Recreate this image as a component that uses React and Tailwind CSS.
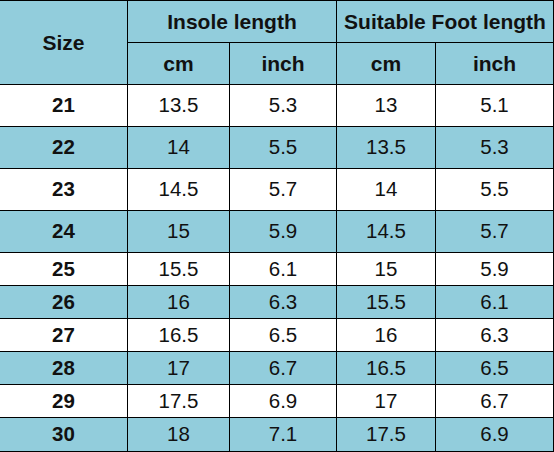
import React from 'react';

// size chart rows: [size, insole cm, insole inch, foot cm, foot inch]
const rows = [
  ['21', '13.5', '5.3', '13', '5.1'],
  ['22', '14', '5.5', '13.5', '5.3'],
  ['23', '14.5', '5.7', '14', '5.5'],
  ['24', '15', '5.9', '14.5', '5.7'],
  ['25', '15.5', '6.1', '15', '5.9'],
  ['26', '16', '6.3', '15.5', '6.1'],
  ['27', '16.5', '6.5', '16', '6.3'],
  ['28', '17', '6.7', '16.5', '6.5'],
  ['29', '17.5', '6.9', '17', '6.7'],
  ['30', '18', '7.1', '17.5', '6.9'],
];

const head = 'bg-[#92cddc] flex items-center justify-center font-bold text-[21px]';

export default function App() {
  return (
    <div className="w-[554px] h-[452px] bg-white font-['Liberation_Sans',Arial,sans-serif] text-[20.5px] text-[#111]">
      <div className="grid grid-cols-[127px_101px_106px_98px_117px] grid-rows-[41px_41px_41px_41px_41px_41px_32px_32px_32px_32px_32px_33px] gap-px bg-black pt-px pr-px pb-px">
        <div className={`${head} row-span-2`}>Size</div>
        <div className={`${head} col-span-2`}>Insole length</div>
        <div className={`${head} col-span-2`}>Suitable Foot length</div>
        <div className={head}>cm</div>
        <div className={head}>inch</div>
        <div className={head}>cm</div>
        <div className={head}>inch</div>

        {rows.map((r, i) => {
          const bg = i % 2 === 1 ? 'bg-[#92cddc]' : 'bg-white';
          return r.map((v, j) => (
            <div
              key={`${i}-${j}`}
              className={`${bg} flex items-center justify-center ${j === 0 ? 'font-bold' : ''}`}
            >
              {v}
            </div>
          ));
        })}
      </div>
    </div>
  );
}
